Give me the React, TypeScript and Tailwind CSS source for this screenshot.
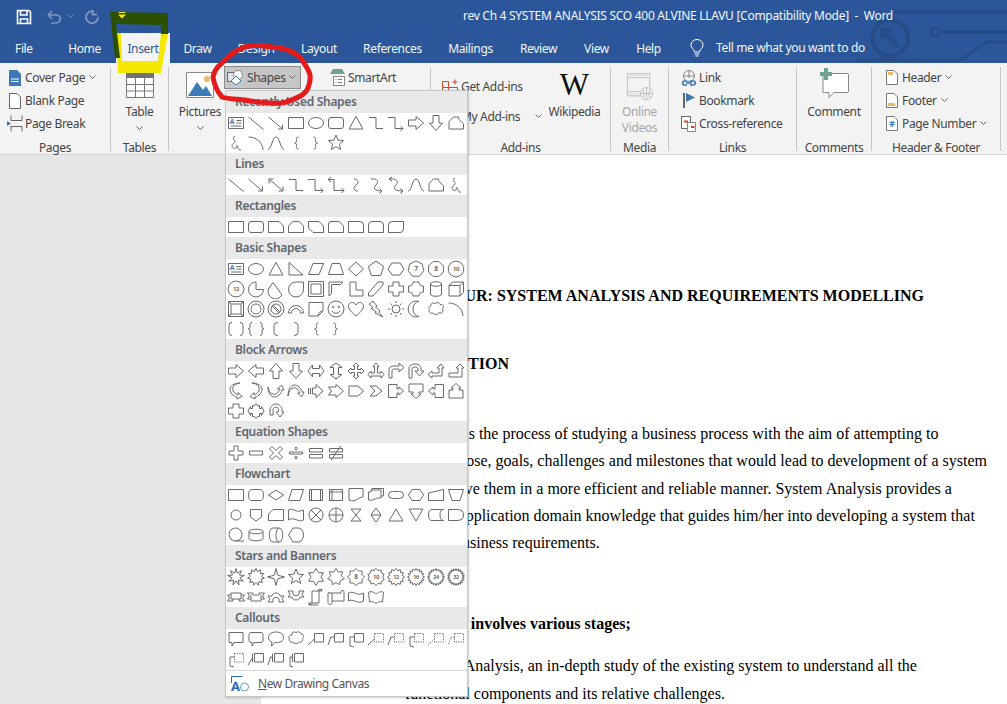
import React from 'react';

type Shape = string | { d: string; dash?: string; t?: string; fs?: number; blue?: boolean };

// helpers for the regular polygons and stars of the gallery
const poly = (n: number, r: number, rot = -90) => {
  const pts: string[] = [];
  for (let i = 0; i < n; i++) {
    const a = ((rot + (360 / n) * i) * Math.PI) / 180;
    pts.push(`${(10 + r * Math.cos(a)).toFixed(2)} ${(10 + r * Math.sin(a)).toFixed(2)}`);
  }
  return 'M' + pts.join('L') + 'Z';
};
const star = (n: number, ro: number, ri: number) => {
  const pts: string[] = [];
  for (let i = 0; i < n * 2; i++) {
    const a = ((-90 + (180 / n) * i) * Math.PI) / 180;
    const r = i % 2 ? ri : ro;
    pts.push(`${(10 + r * Math.cos(a)).toFixed(2)} ${(10 + r * Math.sin(a)).toFixed(2)}`);
  }
  return 'M' + pts.join('L') + 'Z';
};
const circ = (cx: number, cy: number, r: number) =>
  `M${cx - r} ${cy}A${r} ${r} 0 1 0 ${cx + r} ${cy}A${r} ${r} 0 1 0 ${cx - r} ${cy}Z`;
const oval = (rx: number, ry: number) =>
  `M${10 - rx} 10A${rx} ${ry} 0 1 0 ${10 + rx} 10A${rx} ${ry} 0 1 0 ${10 - rx} 10Z`;

const line = 'M2.5 4L17.5 16.5';
const arrow = 'M2.5 4L16.5 16M16.5 11.5V16H12';
const dblArrow = 'M3 4L17 16M3 8.5V4H7.5M12.5 16H17V11.5';
const rect = 'M2.5 4.5H17.5V15.5H2.5Z';
const roundRect = 'M5 4.5H15Q17.5 4.5 17.5 7V13Q17.5 15.5 15 15.5H5Q2.5 15.5 2.5 13V7Q2.5 4.5 5 4.5Z';
const elbow = 'M3 4.5H10V15.5H17';
const elbowArrow = 'M2 4.5H9V15.5H17M14.5 13L17 15.5L14.5 18';
const rightArrow = 'M2.5 7H10V3.5L17.5 10L10 16.5V13H2.5Z';
const leftArrow = 'M17.5 7H10V3.5L2.5 10L10 16.5V13H17.5Z';
const upArrow = 'M7 17.5V10H3.5L10 2.5L16.5 10H13V17.5Z';
const downArrow = 'M7 2.5V10H3.5L10 17.5L16.5 10H13V2.5Z';
const freeform = 'M3 16V8.5L7.5 4H12.5C12.5 9 17.5 8 17.5 12V16Z';
const scribble = 'M9 3C4 5 12 8 8 10C4 12 7 17 10 15C13 13 9 11 11 13C13 15 12 18 15 17';
const arc = 'M2.5 4C10 4 16.5 9 17 17';
const curve = 'M2 16C6 16 6 4 10 4C14 4 14 16 18 16';
const lbrace = 'M12.5 4C9.5 4 10.5 6 10.5 8C10.5 9.5 9.5 10 8.5 10C9.5 10 10.5 10.5 10.5 12C10.5 14 9.5 16 12.5 16';
const rbrace = 'M7.5 4C10.5 4 9.5 6 9.5 8C9.5 9.5 10.5 10 11.5 10C10.5 10 9.5 10.5 9.5 12C9.5 14 10.5 16 7.5 16';
const textBox: Shape = { d: 'M2.5 4.5H17.5V15.5H2.5ZM10.5 7.5H15.5M10.5 10H15.5M5 13H15.5', t: 'A', fs: 7, blue: true };

const sections: { title: string; items: Shape[] }[] = [
  {
    title: 'Recently Used Shapes',
    items: [
      textBox, line, arrow, rect, oval(7.5, 5.5), roundRect, 'M10 3.5L17 16H3Z', elbow, elbowArrow, rightArrow, downArrow, freeform,
      scribble, arc, curve, lbrace, rbrace, star(5, 8, 3.5),
    ],
  },
  {
    title: 'Lines',
    items: [
      line, arrow, dblArrow, elbow, elbowArrow,
      'M5 2L2 4.5L5 7M2 4.5H8V15.5H18M15.5 13L18 15.5L15.5 18',
      'M8 4C13 4 13 8 10 10C7 12 7 16 12 16',
      'M5 4C12 3 13 7 10 10C7 13 8 16 16 16M13.5 13.5L16 16L13.5 18.5',
      'M6 2L3 4L6 6M3 4C11 3 13 7 10 10C7 13 8 16 17 16M14.5 13.5L17 16L14.5 18.5',
      curve, freeform, scribble,
    ],
  },
  {
    title: 'Rectangles',
    items: [
      rect, roundRect,
      'M2.5 4.5H13L17.5 9V15.5H2.5Z',
      'M7 4.5H13L17.5 9V15.5H2.5V9Z',
      'M2.5 4.5H13L17.5 9V15.5H7L2.5 11Z',
      'M5 4.5H13L17.5 9V15.5H2.5V7Q2.5 4.5 5 4.5Z',
      'M2.5 4.5H14Q17.5 4.5 17.5 8V15.5H2.5Z',
      'M6 4.5H14Q17.5 4.5 17.5 8V15.5H2.5V8Q2.5 4.5 6 4.5Z',
      'M6 4.5H17.5V12Q17.5 15.5 14 15.5H2.5V8Q2.5 4.5 6 4.5Z',
    ],
  },
  {
    title: 'Basic Shapes',
    items: [
      textBox, oval(7.5, 5.5), 'M10 3.5L17 16H3Z', 'M3 3.5L17 16H3Z', 'M7 4.5H17.5L13 15.5H2.5Z', 'M6 4.5H14L17.5 15.5H2.5Z', 'M10 3L17.5 10L10 17L2.5 10Z', poly(5, 8),
      'M6 4L14 4L18 10L14 16H6L2 10Z',
      { d: poly(7, 8), t: '7', fs: 6.5 }, { d: poly(8, 8, -67.5), t: '8', fs: 6.5 }, { d: poly(10, 8), t: '10', fs: 6 },
      { d: poly(12, 8), t: '12', fs: 6 },
      'M10 3A7.5 7.5 0 1 0 17.5 10.5H10Z',
      'M7 3.5L3 9A7 7 0 1 0 16 16Z',
      'M17.5 3H10A7.5 7.5 0 1 0 17.5 10.5Z',
      'M2.5 2.5H17.5V17.5H2.5ZM5 5H15V15H5Z',
      'M3 17V3H17L14.5 5.5H5.5V14.5L3 17Z',
      'M4 3H10V11H17V17H4Z',
      'M12 3H17V6L7 17H2.5V14Z',
      'M7 3H13V7H17.5V13H13V17H7V13H2.5V7H7Z',
      'M7 3H13Q13 7 17.5 7V13Q13 13 13 17H7Q7 13 2.5 13V7Q7 7 7 3Z',
      'M4.5 5C4.5 2 15.5 2 15.5 5V15C15.5 18 4.5 18 4.5 15ZM4.5 5C4.5 8 15.5 8 15.5 5',
      'M3 6.5L6.5 3H17.5V13.5L14 17H3ZM3 6.5H14V17M14 6.5L17.5 3',
      'M2.5 2.5H17.5V17.5H2.5ZM5 5H15V15H5ZM2.5 2.5L5 5M17.5 2.5L15 5M2.5 17.5L5 15M17.5 17.5L15 15',
      `${circ(10, 10, 8)}${circ(10, 10, 5)}`,
      `${circ(10, 10, 8)}${circ(10, 10, 5)}M6 7L13 14M7 6L14 13`,
      'M2.5 14A7.5 7.5 0 0 1 17.5 14H14.5A4.5 4.5 0 0 0 5.5 14Z',
      'M3 3.5H17V12L12 17H3ZM12 17C12.5 14 13 12.5 17 12',
      `${circ(10, 10, 8)}${circ(7.2, 8, 0.7)}${circ(12.8, 8, 0.7)}M6 12C8 15 12 15 14 12`,
      'M10 17C4 12 2.5 9.5 2.5 7C2.5 3 8 2 10 6C12 2 17.5 3 17.5 7C17.5 9.5 16 12 10 17Z',
      'M7 2L11 7L9.5 8L14 12L12.5 13L17 18L9 14L10.5 13L5 9.5L7 8.5L3 5Z',
      `${circ(10, 10, 4)}M10 2V4M10 16V18M2 10H4M16 10H18M4.5 4.5L6 6M14 14L15.5 15.5M4.5 15.5L6 14M14 6L15.5 4.5`,
      'M13 2.5A8 8 0 1 0 13 17.5A6 7.5 0 0 1 13 2.5Z',
      'M5 7C4 4 8 3 9 5C10 3 14 3 14 5.5C17 5 18.5 8 16.5 10C18 13 15 15 13 13.5C12 16 8 16 7 14C4 15 2 12 3.5 10.5C2 9 3 7 5 7Z',
      arc,
      'M6 3.5Q3 3.5 3 6.5V13.5Q3 16.5 6 16.5M14 3.5Q17 3.5 17 6.5V13.5Q17 16.5 14 16.5',
      'M6 3.5C3.5 3.5 4 6 4 8C4 9.5 3 10 2 10C3 10 4 10.5 4 12C4 14 3.5 16.5 6 16.5M14 3.5C16.5 3.5 16 6 16 8C16 9.5 17 10 18 10C17 10 16 10.5 16 12C16 14 16.5 16.5 14 16.5',
      'M12 3.5Q8 3.5 8 6.5V13.5Q8 16.5 12 16.5',
      'M8 3.5Q12 3.5 12 6.5V13.5Q12 16.5 8 16.5',
      lbrace, rbrace,
    ],
  },
  {
    title: 'Block Arrows',
    items: [
      rightArrow, leftArrow, upArrow, downArrow,
      'M2 10L6.5 4V7.5H13.5V4L18 10L13.5 16V12.5H6.5V16Z',
      'M10 2L16 6.5H12.5V13.5H16L10 18L4 13.5H7.5V6.5H4Z',
      'M10 2L13 5H11.5V8.5H15V7L18 10L15 13V11.5H11.5V15H13L10 18L7 15H8.5V11.5H5V13L2 10L5 7V8.5H8.5V5H7Z',
      'M10 2L13 5.5H11.5V12H15V10L18 13.5L15 17V15H5V17L2 13.5L5 10V12H8.5V5.5H7Z',
      'M3 17V9C3 6 5 5 8 5H13V2L18 6.5L13 11V8H8C6.5 8 6 9 6 10V17Z',
      'M3 17V8C3 4 6 3 9 3C12 3 15 4 15 8V10H18L13.5 15L9 10H12V8C12 6.5 11 6 9 6C7 6 6 6.5 6 8V17Z',
      'M15 3L18 7H16V15H6V17L2 13.5L6 10V12H13V7H11Z',
      'M3 12H12V7H10L14 3L18 7H16V16H3Z',
      'M14 2C8 3 6 6 7 10C8 12 10 13 12 14V11.5L16 15.5L11 18V16C7 15 4 12 4 8C4 5 8 2 14 2Z',
      'M6 2C12 3 14 6 13 10C12 12 10 13 8 14V11.5L4 15.5L9 18V16C13 15 16 12 16 8C16 5 12 2 6 2Z',
      'M2 6C3 12 6 14 10 13C12 12 13 10 14 8H11.5L15.5 4L18 9H16C15 13 12 16 8 16C5 16 2 12 2 6Z',
      'M2 15C3 9 6 6 10 7C12 8 13 10 14 12H11.5L15.5 16L18 11H16C15 7 12 4 8 4C5 4 2 8 2 15Z',
      'M2.5 7V13M4.5 7V13M6.5 7H10V3.5L17 10L10 16.5V13H6.5Z',
      'M2.5 6H10V3.5L17.5 10L10 16.5V14H2.5L5.5 10Z',
      'M3 5H12L17.5 10L12 15H3Z',
      'M4 5H10L16 10L10 15H4L9 10Z',
      'M2.5 3.5H11V8H13V6L17.5 10L13 14V12H11V16.5H2.5Z',
      'M3 3H17V11H13V13H15L10 17.5L5 13H7V11H3Z',
      'M17.5 3.5H9V8H7V6L2.5 10L7 14V12H9V16.5H17.5Z',
      'M3 17H17V9H13V7H15L10 2.5L5 7H7V9H3Z',
      'M7 3H13V7H17.5V13H13V17H7V13H2.5V7H7Z',
      'M6.5 4.5H8.5L10 2.5L11.5 4.5H13.5V7.5H15.5V5.5L18 10L15.5 14.5V12.5H13.5V15.5H11.5L10 17.5L8.5 15.5H6.5V12.5H4.5V14.5L2 10L4.5 5.5V7.5H6.5Z',
      'M4 14V9C4 5 7 3 10 3C13 3 16 5 16 9V11H18L14 16L10 11H12.5V9C12.5 7 11.5 6 10 6C8.5 6 7 7 7 9V14Z',
    ],
  },
  {
    title: 'Equation Shapes',
    items: [
      'M8 3H12V8H17V12H12V17H8V12H3V8H8Z',
      'M3.5 8H16.5V12H3.5Z',
      'M6 3.5L10 7.5L14 3.5L16.5 6L12.5 10L16.5 14L14 16.5L10 12.5L6 16.5L3.5 14L7.5 10L3.5 6Z',
      `M3.5 9H16.5V11H3.5Z${circ(10, 5.5, 1.2)}${circ(10, 14.5, 1.2)}`,
      'M3.5 5.5H16.5V9H3.5ZM3.5 11.5H16.5V15H3.5Z',
      'M3.5 5.5H16.5V9H3.5ZM3.5 11.5H16.5V15H3.5ZM5 17L15 3',
    ],
  },
  {
    title: 'Flowchart',
    items: [
      rect,
      'M6 4.5H14Q17.5 4.5 17.5 10Q17.5 15.5 14 15.5H6Q2.5 15.5 2.5 10Q2.5 4.5 6 4.5Z',
      'M10 5L17.5 10L10 15L2.5 10Z',
      'M6 4.5H17.5L14 15.5H2.5Z',
      'M3.5 4.5H16.5V15.5H3.5ZM5.5 4.5V15.5M14.5 4.5V15.5',
      'M3.5 4.5H16.5V15.5H3.5ZM6 4.5V15.5M3.5 7H16.5',
      'M3 3.5H17V12C12 12 10 18 3 15Z',
      'M6 3.5H17.5V11H15V13H12.5C9 13 8 16 2.5 15V7H5V5H6ZM5 5H15V11',
      'M6.5 6.5H13.5Q17.5 6.5 17.5 10Q17.5 13.5 13.5 13.5H6.5Q2.5 13.5 2.5 10Q2.5 6.5 6.5 6.5Z',
      'M6 4.5H14L17.5 10L14 15.5H6L2.5 10Z',
      'M2.5 8L17.5 4.5V15.5H2.5Z',
      'M2.5 4.5H17.5L14 15.5H6Z',
      circ(10, 10, 5),
      'M4.5 4.5H15.5V12L10 16L4.5 12Z',
      'M7 4.5H17.5V15.5H2.5V9Z',
      'M2.5 5C7 2 10 9 17.5 5V15C13 18 7 11 2.5 15Z',
      `${circ(10, 10, 7)}M5 5L15 15M15 5L5 15`,
      `${circ(10, 10, 7)}M10 3V17M3 10H17`,
      'M5 4H15L5 16H15Z',
      'M10 3L15 10L10 17L5 10ZM5 10H15',
      'M10 4L17 16H3Z',
      'M3 4H17L10 16Z',
      'M6 4.5H17.5Q14 4.5 14 10Q14 15.5 17.5 15.5H6Q2.5 15.5 2.5 10Q2.5 4.5 6 4.5Z',
      'M2.5 4.5H11Q17.5 4.5 17.5 10Q17.5 15.5 11 15.5H2.5Z',
      `${circ(9.5, 9.5, 6.5)}M9.5 16H18`,
      'M3 6.5C3 3.5 17 3.5 17 6.5V13.5C17 16.5 3 16.5 3 13.5ZM3 6.5C3 9.5 17 9.5 17 6.5',
      'M7 3H13C18 3 18 17 13 17H7C2 17 2 3 7 3ZM13 3C9 3 9 17 13 17',
      'M7 3H13C19 5 19 15 13 17H7L2.5 10Z',
    ],
  },
  {
    title: 'Stars and Banners',
    items: [
      star(9, 8.5, 4),
      star(11, 8.5, 5.5),
      star(4, 8.5, 2.5),
      star(5, 8, 3.5),
      star(6, 8.5, 5),
      star(7, 8.5, 5.5),
      { d: star(8, 8.5, 6.5), t: '8', fs: 6.5 },
      { d: star(10, 8.5, 6.8), t: '10', fs: 6 },
      { d: star(12, 8.5, 6.5), t: '12', fs: 5.5 },
      { d: star(16, 8.5, 6.5), t: '16', fs: 5.5 },
      { d: star(20, 8.5, 6.4), t: '24', fs: 5.5 },
      { d: star(22, 8.5, 6.4), t: '32', fs: 5.5 },
      'M1.5 8H5V6H15V8H18.5L16.5 11L18.5 14H13V12H7V14H1.5L3.5 11ZM5 8V12H7M15 8V12H13',
      'M1.5 6H7V8H13V6H18.5L16.5 9L18.5 12H15V14H5V12H1.5L3.5 9ZM5 8V12M15 8V12',
      'M2 15L4 12L2 9H6C6 5 14 5 14 9H18L16 12L18 15H13V12C13 10 7 10 7 12V15Z',
      'M2 4L4 7L2 10H6C6 14 14 14 14 10H18L16 7L18 4H13V7C13 9 7 9 7 7V4Z',
      'M6 4H16V2.5H13C12 2.5 12 4 13 4M6 4V16C6 18 3 18 3 16H13V4M3 16V18H12',
      'M3 6H15V4.5C15 3 18 3 18 5V14H6V16C6 18 2 18 2 15.5V7C2 5 3 5 4 6M6 6V14',
      'M2.5 6C7 3 12 10 17.5 6V14C12 18 7 11 2.5 14Z',
      'M2.5 5.5C6 3 9 7 10 6.5C12 7 14 3 17.5 5.5L16.5 15C14 13 12 16.5 10 16C8 16.5 6 13 3.5 15Z',
    ],
  },
  {
    title: 'Callouts',
    items: [
      'M3 3.5H17V13.5H8L6 17V13.5H3Z',
      'M5 3.5H15Q17 3.5 17 5.5V11.5Q17 13.5 15 13.5H8L6 17V13.5H5Q3 13.5 3 11.5V5.5Q3 3.5 5 3.5Z',
      'M10 3C14 3 17.5 5 17.5 8.5C17.5 12 14 14 9 13.5L5.5 17L6 13C3.5 12 2.5 10.5 2.5 8.5C2.5 5 6 3 10 3Z',
      'M6 6C5 3 9 2 10 4C11 2 15 3 15 5C18 5 18.5 8 16.5 9.5C17.5 12 15 14 13 13C12 15 8 15 7 13C4 14 2 11 3.5 9.5C2 8 3.5 6 6 6ZM5 15.5L5 15.6M3.5 17.5L3.5 17.6',
      'M8.5 4.5H17.5V13H8.5ZM8.5 10L2 16',
      'M8.5 4.5H17.5V13H8.5ZM8.5 8H5L2 16',
      'M8.5 4.5H17.5V13H8.5ZM8.5 8H4V17L8 18',
      { d: 'M8.5 10L2 16', dash: 'M8.5 4.5H17.5V13H8.5Z' },
      { d: 'M8.5 8H5L2 16', dash: 'M8.5 4.5H17.5V13H8.5Z' },
      { d: 'M8.5 8H4V17L8 18', dash: 'M8.5 4.5H17.5V13H8.5Z' },
      { d: '', dash: 'M8.5 4.5H17.5V13H8.5ZM8.5 10L2 16' },
      { d: '', dash: 'M8.5 4.5H17.5V13H8.5ZM8.5 8H5L2 16' },
      { d: 'M8.5 8H4V17L8 18', dash: 'M8.5 4.5H17.5V13H8.5Z' },
      'M8.5 4.5V13M8.5 4.5H17.5V13H8.5ZM6.5 4.5V13M6.5 9L2 16',
      'M8.5 4.5H17.5V13H8.5ZM6.5 4.5V13M6.5 8H4.5L2 16',
      'M8.5 4.5H17.5V13H8.5ZM6.5 4.5V13M6.5 8H4V17L7 18',
    ],
  },
];

const ShapeIcon = ({ shape }: { shape: Shape }) => {
  const s = typeof shape === 'string' ? { d: shape } : shape;
  return (
    <svg width="20" height="20" viewBox="0 0 20 20" fill="none" stroke="#6a6a6a" strokeWidth="1">
      {s.d && <path d={s.d} />}
      {s.dash && <path d={s.dash} strokeDasharray="1.2 1.2" />}
      {s.t && (
        <text
          x={s.blue ? 6 : 10}
          y={s.blue ? 10.5 : 12.3}
          textAnchor="middle"
          fontSize={s.fs}
          stroke="none"
          fill={s.blue ? '#2b6cb8' : '#555555'}
          fontFamily="Noto Sans, sans-serif"
          fontWeight="600"
        >
          {s.t}
        </text>
      )}
    </svg>
  );
};

const Chevron = ({ color = '#666666' }: { color?: string }) => (
  <svg width="7" height="5" viewBox="0 0 7 5" fill="none" stroke={color} strokeWidth="1" className="shrink-0">
    <path d="M0.5 0.5L3.5 3.5L6.5 0.5" />
  </svg>
);

const ShapesMenu = () => (
  <div className="absolute left-[225px] top-[90px] w-[243px] h-[607px] bg-white border border-[#c6c6c6] shadow-[1px_1px_2px_rgba(0,0,0,0.2)] flex flex-col">
    {sections.map((sec) => (
      <div key={sec.title}>
        <div className="h-[22px] bg-[#e9e9e9] flex items-center pl-[9px] text-[12px] font-semibold tracking-[-0.3px] text-[#5f6670] whitespace-nowrap">
          {sec.title}
        </div>
        <div className="grid grid-cols-[repeat(12,20px)] auto-rows-[20px]">
          {sec.items.map((it, i) => (
            <ShapeIcon key={i} shape={it} />
          ))}
        </div>
      </div>
    ))}
    <div className="border-t border-[#d8d8d8] mt-[1px] flex-1 flex items-center pl-[4px] gap-[8px] text-[12px] text-[#555555]">
      <svg width="20" height="20" viewBox="0 0 20 20" fill="none">
        <path d="M1.5 2.5H12.5M1.5 2.5V9" stroke="#2b6cb8" strokeWidth="1" />
        <text x="1" y="17" fontSize="13" fontWeight="700" fill="#2b6cb8" fontFamily="Noto Sans, sans-serif">A</text>
        <circle cx="14.5" cy="13" r="4" stroke="#5c9bd1" strokeWidth="1" />
      </svg>
      <span className="whitespace-nowrap tracking-[-0.45px]">
        <span className="underline">N</span>ew Drawing Canvas
      </span>
    </div>
  </div>
);

const Group = ({ w, label, children }: { w: string; label: string; children: React.ReactNode }) => (
  <div className={`${w} h-[84px] flex flex-col border-r border-[#c6c6c6]`}>
    <div className="flex-1 min-h-0 -mt-[1px]">{children}</div>
    <div className="h-[16px] -mb-[5px] leading-[16px] text-center text-[#444444] whitespace-nowrap">{label}</div>
  </div>
);

const Row = ({ icon, text, chevron, left }: { icon: React.ReactNode; text: string; chevron?: boolean; left: string }) => (
  <div className={`h-[23px] flex items-center ${left} whitespace-nowrap text-[#444444]`}>
    <span className="w-[17px] h-[17px] flex items-center justify-center shrink-0">{icon}</span>
    <span className="ml-[2px]">{text}</span>
    {chevron && (
      <span className="ml-[4px]">
        <Chevron />
      </span>
    )}
  </div>
);

const tabs = [
  { t: 'Home', w: 'w-[63px]' },
  { t: 'Insert', w: 'w-[54px]' },
  { t: 'Draw', w: 'w-[55px]' },
  { t: 'Design', w: 'w-[62px]' },
  { t: 'Layout', w: 'w-[64px]' },
  { t: 'References', w: 'w-[83px]' },
  { t: 'Mailings', w: 'w-[73px]' },
  { t: 'Review', w: 'w-[63px]' },
  { t: 'View', w: 'w-[53px]' },
  { t: 'Help', w: 'w-[51px]' },
];

const docLines = [
  { t: 'CHAPTER FOUR: SYSTEM ANALYSIS AND REQUIREMENTS MODELLING', c: 'pl-[99px] font-bold mt-[132px]' },
  { t: '4.0 INTRODUCTION', c: 'pl-[96px] font-bold mt-[50px]' },
  { t: 'System Analysis is the process of studying a business process with the aim of attempting to', c: 'pl-[93px] mt-[52px]' },
  { t: 'identify its purpose, goals, challenges and milestones that would lead to development of a system', c: 'pl-[103px] mt-[9px]' },
  { t: 'that would achieve them in a more efficient and reliable manner. System Analysis provides a', c: 'pl-[98px] mt-[10px]' },
  { t: 'developer with application domain knowledge that guides him/her into developing a system that', c: 'pl-[98px] mt-[9px]' },
  { t: "meets client's business requirements.", c: 'pl-[103px] mt-[9px]' },
  { t: 'System Analysis involves various stages;', c: 'pl-[96px] font-bold mt-[63px]' },
  { t: '1. Preliminary Analysis, an in-depth study of the existing system to understand all the', c: 'pl-[108px] mt-[24px]' },
  { t: 'functional components and its relative challenges.', c: 'pl-[144px] mt-[10px]' },
];

export default function App() {
  return (
    <div className="relative w-[1007px] h-[704px] overflow-hidden flex flex-col bg-[#e6e6e6] text-[12px] tracking-[-0.35px] [font-family:'Noto_Sans',sans-serif]">
      {/* circuit pattern of the title bar */}
      <div className="bg-[#2b579a] h-[63px] flex flex-col relative">
        <svg className="absolute inset-0" width="1007" height="63" fill="none" stroke="#264d88" strokeWidth="3">
          <circle cx="890" cy="38" r="18" strokeWidth="4" />
          <path d="M882 39V30H891M882 30L899 47" strokeWidth="4" />
          <circle cx="935" cy="32" r="4" />
          <path d="M939 32H1007M894 12H1007M857 60H960L987 42H1007" />
        </svg>
        {/* quick access */}
        <div className="h-[33px] flex items-center pl-[16px] text-white relative">
          <svg width="16" height="16" viewBox="0 0 16 16" fill="none" stroke="#ffffff" strokeWidth="1.6">
            <path d="M1.5 1.5H13L14.5 3V14.5H1.5ZM4.5 1.5V6H11V1.5M4.5 14.5V10H11.5V14.5" />
          </svg>
          <svg className="ml-[14px]" width="16" height="16" viewBox="0 0 16 16" fill="none" stroke="#7f97bf" strokeWidth="1.6">
            <path d="M2 6H10C16 6 16 14 9 14H5M2 6L6 2M2 6L6 10" />
          </svg>
          <span className="ml-[5px]">
            <Chevron color="#7f97bf" />
          </span>
          <svg className="ml-[10px]" width="16" height="16" viewBox="0 0 16 16" fill="none" stroke="#7f97bf" strokeWidth="1.8">
            <path d="M10 2.5A6 6 0 1 0 14 8M8.5 1V5.5H13" />
          </svg>
          <span className="absolute left-[463px] top-[7px] leading-[17px] whitespace-pre text-[#f2f5fa] text-[12px] tracking-[-0.28px]">
            {'rev Ch 4 SYSTEM ANALYSIS SCO 400 ALVINE LLAVU [Compatibility Mode]  -  Word'}
          </span>
        </div>
        {/* tabs */}
        <div className="h-[30px] flex items-stretch text-[#f2f5fa] relative">
          <div className="w-[53px] pl-[15px] pt-[1px] flex items-center">File</div>
          {tabs.map((t) => (
            <div
              key={t.t}
              className={`${t.w} pt-[1px] flex items-center justify-center ${t.t === 'Insert' ? 'bg-[#f3f3f3] text-[#2b579a]' : ''}`}
            >
              {t.t}
            </div>
          ))}
          <div className="ml-[16px] flex items-center whitespace-nowrap">
            <svg width="14" height="18" viewBox="0 0 14 18" fill="none" stroke="#ffffff" strokeWidth="1">
              <path d="M4.5 13C4.5 10 1 9.5 1 6A6 5.5 0 0 1 13 6C13 9.5 9.5 10 9.5 13ZM4.5 15H9.5M5.5 17H8.5" />
            </svg>
            <span className="ml-[12px]">Tell me what you want to do</span>
          </div>
        </div>
      </div>

      {/* ribbon */}
      <div className="h-[92px] shrink-0 bg-[#f3f3f3] border-b border-[#d4d4d4] flex items-start pt-[4px]">
        <Group w="w-[111px]" label="Pages">
          <Row
            left="pl-[6px]"
            text="Cover Page"
            chevron
            icon={
              <svg width="12" height="16" viewBox="0 0 12 16">
                <path d="M0 0H8L12 4V16H0Z" fill="#3b78b5" />
                <path d="M2 9H10M2 11.5H10" stroke="#ffffff" />
              </svg>
            }
          />
          <Row
            left="pl-[6px]"
            text="Blank Page"
            icon={
              <svg width="12" height="16" viewBox="0 0 12 16" fill="#ffffff" stroke="#666666">
                <path d="M0.5 0.5H8L11.5 4V15.5H0.5Z" />
              </svg>
            }
          />
          <Row
            left="pl-[6px]"
            text="Page Break"
            icon={
              <svg width="16" height="17" viewBox="0 0 16 17" fill="none" stroke="#666666">
                <path d="M4 5.5V0.5M15 0.5V5.5H4M4 11.5H15V16.5M4 16.5V11.5" />
                <path d="M0 6L4 8.5L0 11Z" fill="#3b78b5" stroke="none" />
              </svg>
            }
          />
        </Group>
        <Group w="w-[58px]" label="Tables">
          <div className="flex flex-col items-center text-[#444444]">
            <svg width="28" height="26" viewBox="0 0 28 26" className="mt-[6px]" fill="#ffffff" stroke="#777777">
              <path d="M0.5 0.5H27.5V25.5H0.5Z" />
              <path d="M0 0H28V6H0Z" fill="#707070" stroke="none" />
              <path d="M0.5 12.5H27.5M0.5 19H27.5M9.5 6V25.5M18.5 6V25.5" fill="none" />
            </svg>
            <span className="mt-[6px] leading-[16px]">Table</span>
            <span className="mt-[6px]">
              <Chevron />
            </span>
          </div>
        </Group>
        <Group w="w-[262px]" label="">
          <div className="flex text-[#444444]">
            <div className="w-[62px] flex flex-col items-center">
              <svg width="28" height="26" viewBox="0 0 28 26" className="mt-[6px]" fill="#ffffff" stroke="#888888">
                <path d="M0.5 0.5H27.5V25.5H0.5Z" />
                <circle cx="21" cy="7" r="3" fill="#e8b96a" stroke="none" />
                <path d="M2 24L11 10L17 18L20 14L26 24Z" fill="#3d7ab8" stroke="none" />
              </svg>
              <span className="mt-[6px] leading-[16px]">Pictures</span>
              <span className="mt-[6px]">
                <Chevron />
              </span>
            </div>
            <div className="ml-[-7px]">
              <div className="w-[77px] h-[23px] bg-[#c6c6c6] border border-[#8a8a8a] flex items-center pl-[2px]">
                <svg width="17" height="15" viewBox="0 0 17 15" fill="none" stroke="#5b6b80">
                  <rect x="0.5" y="2.5" width="9" height="9" fill="#dfe6ef" />
                  <circle cx="11" cy="5" r="4.5" fill="#ffffff" stroke="#8a8a8a" />
                  <path d="M9 6L14 11L9 15L4 11Z" fill="#ffffff" stroke="#3b78b5" />
                </svg>
                <span className="ml-[3px]">Shapes</span>
                <span className="ml-[3px]">
                  <Chevron />
                </span>
              </div>
            </div>
            <div className="ml-[29px] flex items-center h-[23px] whitespace-nowrap">
              <svg width="16" height="17" viewBox="0 0 16 17" fill="none">
                <path d="M0 5L3 0H12L15 5Z" fill="#6fa28f" />
                <rect x="3.5" y="7.5" width="11" height="9" fill="#ffffff" stroke="#888888" />
                <path d="M8 10.5H12M8 13.5H12M5.5 10.5H6.5M5.5 13.5H6.5" stroke="#777777" />
              </svg>
              <span className="ml-[2px]">SmartArt</span>
            </div>
          </div>
        </Group>
        <Group w="w-[180px]" label="Add-ins">
          <div className="flex text-[#444444]">
            <div className="w-[116px] pl-[11px] flex flex-col">
              <div className="h-[23px] mt-[9px] flex items-center whitespace-nowrap">
                <svg width="16" height="15" viewBox="0 0 16 15" fill="none" stroke="#d24726">
                  <path d="M0.5 2.5H6.5V8.5H0.5ZM0.5 8.5V14.5M6.5 8.5V14.5M6.5 8.5H15.5V14.5M10.5 3H15.5M13 0.5V5.5" />
                </svg>
                <span className="ml-[3px]">Get Add-ins</span>
              </div>
              <div className="h-[23px] mt-[7px] flex items-center whitespace-nowrap">
                <span className="ml-[19px]">My Add-ins</span>
                <span className="ml-[15px]">
                  <Chevron />
                </span>
              </div>
            </div>
            <div className="w-[55px] flex flex-col items-center">
              <span className="mt-[4px] leading-[30px] text-[31px] tracking-normal text-[#111111] [font-family:'Liberation_Serif',serif]">W</span>
              <span className="mt-[4px] leading-[16px]">Wikipedia</span>
            </div>
          </div>
        </Group>
        <Group w="w-[58px]" label="Media">
          <div className="flex flex-col items-center text-[#a6a6a6]">
            <svg width="28" height="28" viewBox="0 0 28 30" fill="none" stroke="#bdbdbd" className="mt-[7px]">
              <path d="M0.5 0.5H24.5V24.5H0.5ZM0.5 5H24.5M0.5 20H16" />
              <path d="M3 2.5H22M3 22.5H14" strokeDasharray="2 1.5" />
              <circle cx="21" cy="22" r="6.5" fill="#f3f3f3" />
              <path d="M14.5 22H27.5M21 15.5V28.5M17 17.5C19 20 19 24 17 26.5M25 17.5C23 20 23 24 25 26.5" />
            </svg>
            <span className="mt-[3px] leading-[16px]">Online</span>
            <span className="leading-[16px]">Videos</span>
          </div>
        </Group>
        <Group w="w-[128px]" label="Links">
          <Row
            left="pl-[11px]"
            text="Link"
            icon={
              <svg width="16" height="16" viewBox="0 0 16 16" fill="none">
                <circle cx="8" cy="6" r="5.5" stroke="#888888" />
                <path d="M2.5 6H13.5M8 0.5V8" stroke="#888888" />
                <path d="M6 11H3.5C1 11 1 15 3.5 15H6M9 11H12C15 11 15 15 12 15H9M5 13H11" stroke="#3b78b5" strokeWidth="1.6" />
              </svg>
            }
          />
          <Row
            left="pl-[11px]"
            text="Bookmark"
            icon={
              <svg width="14" height="15" viewBox="0 0 14 15">
                <rect x="1" y="0" width="2" height="15" fill="#666666" />
                <path d="M4 0L13 4.5L4 9Z" fill="#3b78b5" />
              </svg>
            }
          />
          <Row
            left="pl-[11px]"
            text="Cross-reference"
            icon={
              <svg width="16" height="16" viewBox="0 0 16 16" fill="none">
                <path d="M0.5 0.5H9.5V12.5H0.5Z" stroke="#666666" fill="#ffffff" />
                <path d="M6.5 6.5H14.5V15.5H6.5Z" stroke="#888888" fill="#ffffff" />
                <path d="M3 5.5H7M10 11H13.5" stroke="#d24726" strokeWidth="2" />
              </svg>
            }
          />
        </Group>
        <Group w="w-[75px]" label="Comments">
          <div className="flex flex-col items-center text-[#444444]">
            <svg width="31" height="31" viewBox="0 0 31 31" fill="none" className="mt-[2px]">
              <path d="M4 5.5H28Q29.5 5.5 29.5 7V23Q29.5 24.5 28 24.5H15L10 29.5V24.5H4Z" fill="#ffffff" stroke="#888888" />
              <path d="M5 0H9V4H13V8H9V12H5V8H1V4H5Z" fill="#6fa28f" />
            </svg>
            <span className="mt-[5px] leading-[16px]">Comment</span>
          </div>
        </Group>
        <Group w="w-[129px]" label="Header & Footer">
          {[
            { t: 'Header', fill: 'M2 2H7V5H2Z' },
            { t: 'Footer', fill: 'M2 10H9V13H2Z' },
            { t: 'Page Number', fill: '' },
          ].map((r) => (
            <Row
              key={r.t}
              left="pl-[11px]"
              text={r.t}
              chevron
              icon={
                <svg width="12" height="15" viewBox="0 0 12 15" fill="#ffffff" stroke="#777777">
                  <path d="M0.5 0.5H8L11.5 4V14.5H0.5Z" />
                  {r.fill ? (
                    <path d={r.fill} fill="#e8b96a" stroke="none" />
                  ) : (
                    <text x="6" y="11" textAnchor="middle" fontSize="8" stroke="none" fill="#3b78b5" fontWeight="700">
                      #
                    </text>
                  )}
                </svg>
              }
            />
          ))}
        </Group>
      </div>

      {/* document */}
      <div className="flex-1 min-h-0 pl-[261px]">
        <div className="h-full bg-white text-[16px] leading-[18px] tracking-normal text-black whitespace-nowrap [font-family:'Liberation_Serif',serif] flex flex-col">
          {docLines.map((l) => (
            <p key={l.t} className={l.c}>
              {l.t}
            </p>
          ))}
        </div>
      </div>

      <ShapesMenu />

      {/* hand-drawn marks on top of the screenshot */}
      <svg className="absolute inset-0 pointer-events-none" width="1007" height="704" fill="none">
        <path d="M116 33L118 73H161L168 33H161L158 61H122L121 33Z" fill="#f5e800" />
        <path d="M110 12L168 13L168 34H161L161 25L116 24L120 58H115Z" fill="#2d5000" />
        <path d="M118.5 12.5H125.5" stroke="#f5e800" strokeWidth="1" />
        <path d="M118 14.5H126L122 18.5Z" fill="#f5e800" />
        <path
          d="M238 50C248 44 262 45 272 47C288 48 298 54 302 60C306 66 309 70 310 75C311 82 309 86 307 90C304 94 302 96 298 97C292 100 288 102 282 103C270 104 256 102 245 100C236 99 228 99 222 97C216 90 214 84 213 77C214 71 217 67 222 63C227 58 232 53 238 50Z"
          stroke="#e51b1b"
          strokeWidth="5"
        />
      </svg>
    </div>
  );
}
